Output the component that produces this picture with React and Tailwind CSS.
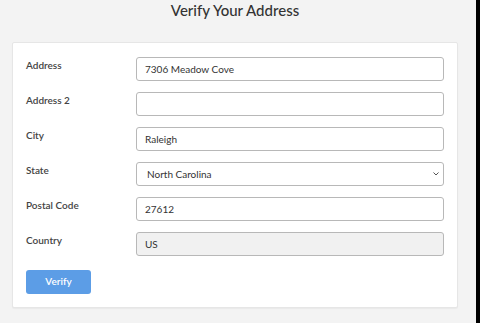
import React, { useState } from 'react';

const fields = [
  { name: 'address', label: 'Address' },
  { name: 'address2', label: 'Address 2' },
  { name: 'city', label: 'City' },
];

function App() {
  const [form, setForm] = useState({
    address: '7306 Meadow Cove',
    address2: '',
    city: 'Raleigh',
    state: 'NC',
    postal: '27612',
    country: 'US',
  });

  const handleChange = (e) => {
    setForm({ ...form, [e.target.name]: e.target.value });
  };

  const inputClass =
    'block w-[308px] h-[24px] px-[8px] border border-[#b8b8b8] rounded-[3px] text-[10px] text-[#333] outline-none';
  const labelClass = 'w-[110px] shrink-0 text-[10px] font-semibold text-[#444] leading-[14px] pt-[1px]';

  return (
    <div className="w-[480px] h-[323px] overflow-hidden bg-[#f3f3f3] border-r-[4px] border-r-black font-['Lato',sans-serif]">
      <div className="flex flex-col pl-[12px] pr-[18px]">
        <h1 className="text-[15px] font-medium text-[#333] text-center h-[42px] leading-[21px]">
          Verify Your Address
        </h1>

        <form className="bg-white border border-[#e6e6e6] rounded-[2px] shadow-[0_1px_1px_rgba(0,0,0,0.04)] pt-[14px] pb-[13px] pl-[13px] pr-[13px] flex flex-col gap-[11px]">
          {fields.map((f) => (
            <div key={f.name} className="flex items-start">
              <label className={labelClass}>{f.label}</label>
              <input
                name={f.name}
                value={form[f.name]}
                onChange={handleChange}
                className={`${inputClass} bg-white`}
              />
            </div>
          ))}

          <div className="flex items-start">
            <label className={labelClass}>State</label>
            <div className="relative flex">
              <select
                name="state"
                value={form.state}
                onChange={handleChange}
                className={`${inputClass} bg-white appearance-none pl-[10px]`}
              >
                <option value="NC">North Carolina</option>
              </select>
              <svg
                className="absolute right-[5px] top-[10px] w-[6px] h-[4px] pointer-events-none"
                viewBox="0 0 6 4"
              >
                <path d="M0.5 0.5 L3 3 L5.5 0.5" fill="none" stroke="#555" strokeWidth="1" />
              </svg>
            </div>
          </div>

          <div className="flex items-start">
            <label className={labelClass}>Postal Code</label>
            <input
              name="postal"
              value={form.postal}
              onChange={handleChange}
              className={`${inputClass} bg-white`}
            />
          </div>

          <div className="flex items-start">
            <label className={labelClass}>Country</label>
            <input
              name="country"
              value={form.country}
              disabled
              className={`${inputClass} bg-[#f1f1f1]`}
            />
          </div>

          <div>
            <button
              type="button"
              className="w-[65px] h-[24px] bg-[#5c9de6] text-white text-[10px] font-semibold rounded-[3px]"
            >
              Verify
            </button>
          </div>
        </form>
      </div>
    </div>
  );
}

export default App;
